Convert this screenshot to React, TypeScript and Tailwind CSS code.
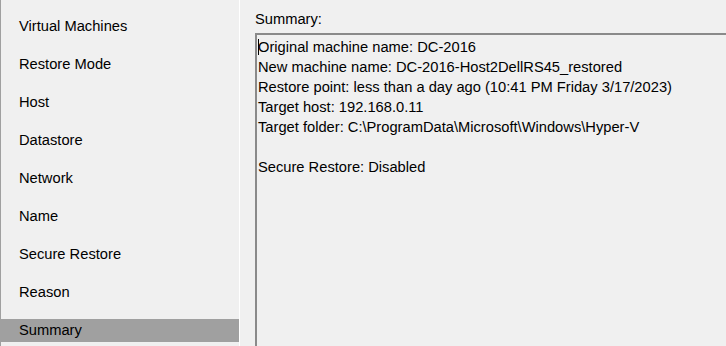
import React from "react";

const steps = [
    "Virtual Machines",
    "Restore Mode",
    "Host",
    "Datastore",
    "Network",
    "Name",
    "Secure Restore",
    "Reason",
    "Summary",
];

const lines = [
    "Original machine name: DC-2016",
    "New machine name: DC-2016-Host2DellRS45_restored",
    "Restore point: less than a day ago (10:41 PM Friday 3/17/2023)",
    "Target host: 192.168.0.11",
    "Target folder: C:\\ProgramData\\Microsoft\\Windows\\Hyper-V",
    "",
    "Secure Restore: Disabled",
];

const App = () => {
    return (
        <div
            className="flex w-[726px] h-[346px] overflow-hidden bg-[#f0f0f0] text-black text-[14.7px]"
            style={{ fontFamily: '"Liberation Sans", Arial, sans-serif' }}
        >
            <div className="w-[240px] shrink-0 border-l border-[#a0a0a0] border-r border-r-white pt-[15px]">
                {steps.map((s) => (
                    <div
                        key={s}
                        className={
                            "h-[23px] mb-[15px] pl-[18px] flex items-center " +
                            (s === "Summary" ? "bg-[#a0a0a0]" : "")
                        }
                    >
                        {s}
                    </div>
                ))}
            </div>
            <div className="flex-1 pl-[15px] pt-[9px] flex flex-col">
                <div className="h-[24px] leading-[20px]">Summary:</div>
                <div className="flex-1 -mr-4 -mb-4 border-2 border-[#8a8a8a] pl-[1px] pt-[2px]">
                    {lines.map((l, i) => (
                        <div key={i} className="h-[20px] leading-[20px] whitespace-nowrap relative">
                            {i === 0 && (
                                <span className="absolute left-0 top-[2px] w-px h-[16px] bg-black" />
                            )}
                            {l}
                        </div>
                    ))}
                </div>
            </div>
        </div>
    );
};

export default App;
